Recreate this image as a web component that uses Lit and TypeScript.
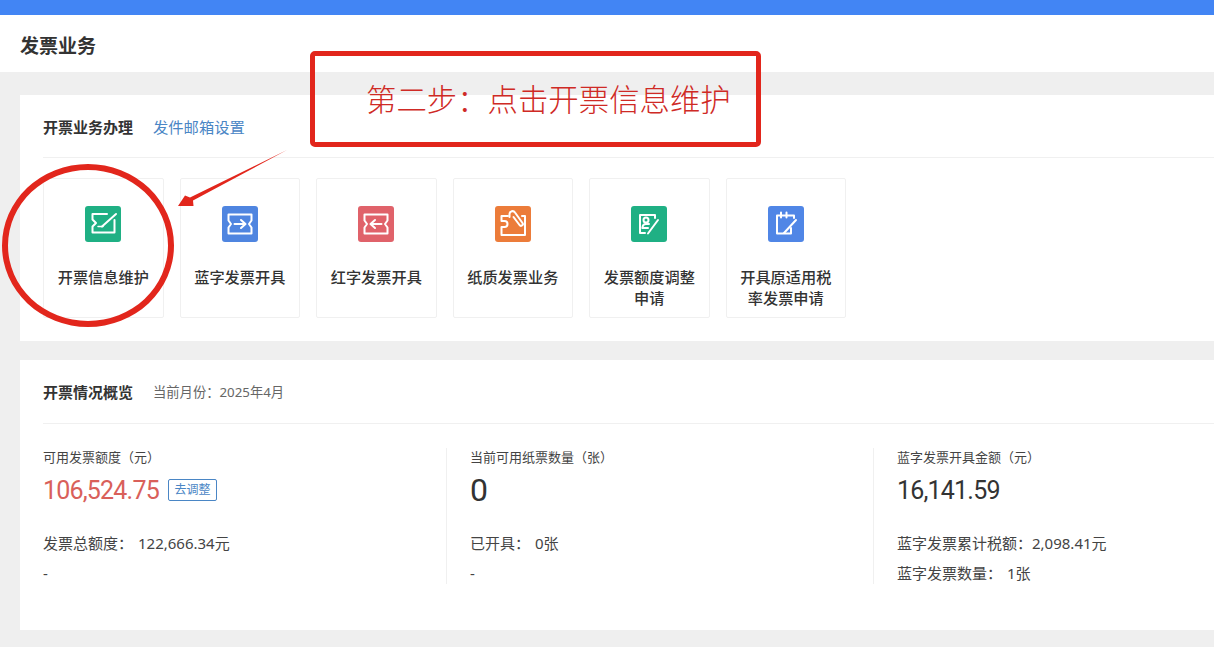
import { LitElement, html, css, svg } from 'lit';
import { customElement } from 'lit/decorators.js';

const tiles = [
  {
    label: '开票信息维护',
    color: '#1fb084',
    icon: svg`<path d="M22 8H7.500V13.500L11 17L7.500 20.500V26.500H29.500V14"/><path d="M17 20.500L31 8"/><path d="M13 20.500H18" stroke-width="1.500"/>`,
  },
  {
    label: '蓝字发票开具',
    color: '#4f85e0',
    icon: svg`<path d="M6.500 8.500H29.500V14.500L27 18L29.500 21.500V27.500H6.500V21.500L9 18L6.500 14.500Z"/><path d="M12.500 18H23"/><path d="M19 14L23.500 18L19 22"/>`,
  },
  {
    label: '红字发票开具',
    color: '#e0626a',
    icon: svg`<path d="M6.500 8.500H29.500V14.500L27 18L29.500 21.500V27.500H6.500V21.500L9 18L6.500 14.500Z"/><path d="M13 18H23.500"/><path d="M17 14L12.500 18L17 22"/>`,
  },
  {
    label: '纸质发票业务',
    color: '#ec7c3a',
    icon: svg`<path d="M13 10H6.500V15H9.500A3 3 0 0 1 9.500 21H6.500V29H30V10H27"/><path d="M14.500 11V8A3 3 0 0 1 20 6.500L27.500 17A1.800 1.800 0 0 1 24.500 19L18.500 11"/>`,
  },
  {
    label: '发票额度调整申请',
    color: '#1fb084',
    icon: svg`<path d="M24 12V9H9V27H14"/><circle cx="15" cy="14" r="2.500"/><path d="M11.500 22C11.500 19 13 18 15 18H18"/><path d="M11.500 22H17"/><path d="M17 27.500L27 14"/>`,
  },
  {
    label: '开具原适用税率发票申请',
    color: '#5086e6',
    icon: svg`<path d="M26 12V9.500H9V27.500H23V22"/><path d="M13 6.500V11.500M18.500 6.500V11.500"/><path d="M16 27L28 14"/>`,
  },
];

const stats = [
  {
    title: '可用发票额度（元）',
    value: '106,524.75',
    red: true,
    action: '去调整',
    lines: [{ label: '发票总额度：', value: '122,666.34元', gap: true }, { label: '-' }],
  },
  {
    title: '当前可用纸票数量（张）',
    value: '0',
    big: true,
    lines: [{ label: '已开具：', value: '0张', gap: true }, { label: '-' }],
  },
  {
    title: '蓝字发票开具金额（元）',
    value: '16,141.59',
    lines: [
      { label: '蓝字发票累计税额：', value: '2,098.41元' },
      { label: '蓝字发票数量：', value: '1张', gap: true },
    ],
  },
];

@customElement('app-root')
export class AppRoot extends LitElement {
  static styles = css`
    :host {
      display: block;
      position: relative;
      height: 647px;
      overflow: hidden;
      background: #efefef;
      color: #333;
      font-family: 'Noto Sans', 'Noto Sans CJK SC', sans-serif;
      font-size: 14px;
    }
    .topbar {
      height: 15px;
      background: #4285f4;
    }
    .page-head {
      box-sizing: border-box;
      height: 57px;
      padding: 2px 0 0 20px;
      display: flex;
      align-items: center;
      background: #fff;
      font-size: 19px;
      font-weight: 700;
      color: #333;
    }
    .content {
      padding: 23px 0 0 20px;
      display: flex;
      flex-direction: column;
      gap: 19px;
    }
    .card {
      background: #fff;
      padding-left: 23px;
    }
    .card-head {
      display: flex;
      align-items: center;
      gap: 20px;
      border-bottom: 1px solid #f0f0f0;
    }
    .biz {
      height: 246px;
    }
    .biz .card-head {
      height: 62px;
    }
    .card-title {
      font-size: 15px;
      font-weight: 700;
      color: #333;
      white-space: nowrap;
    }
    .link {
      color: #4a86c5;
      font-size: 15.3px;
    }
    .tiles {
      display: flex;
      gap: 16px;
      padding-top: 20px;
    }
    .tile {
      box-sizing: border-box;
      width: 120.5px;
      height: 140px;
      border: 1px solid #f0f0f0;
      border-radius: 2px;
      padding-top: 27px;
      display: flex;
      flex-direction: column;
      align-items: center;
    }
    .tile-icon {
      width: 36px;
      height: 36px;
      display: block;
    }
    .tile-icon g {
      fill: none;
      stroke: #fff;
      stroke-width: 2;
      stroke-linejoin: round;
      stroke-linecap: round;
    }
    .tile-label {
      margin-top: 25px;
      width: 94px;
      text-align: center;
      font-size: 15.2px;
      font-weight: 500;
      line-height: 21px;
      color: #333;
    }
    .overview {
      height: 270px;
    }
    .overview .card-head {
      height: 63px;
    }
    .month {
      font-size: 13.3px;
      color: #666;
    }
    .stats {
      display: grid;
      grid-template-columns: 403px 427px 341px;
      padding-top: 24px;
    }
    .stat {
      height: 136px;
      box-sizing: border-box;
    }
    .stat + .stat {
      border-left: 1px solid #f0f0f0;
      padding-left: 23px;
    }
    .stat-title {
      font-size: 13px;
      line-height: 19px;
      color: #444;
    }
    .stat-value {
      display: flex;
      align-items: center;
      gap: 9px;
      height: 30px;
      margin-top: 8px;
      font-family: Roboto, 'Noto Sans', sans-serif;
      font-size: 25px;
      letter-spacing: -0.8px;
      color: #333;
    }
    .stat-value.red {
      color: #d9605a;
    }
    .stat-value.big {
      font-size: 32px;
    }
    .adjust {
      box-sizing: border-box;
      width: 49px;
      height: 22px;
      border: 1px solid #4a86c5;
      border-radius: 2px;
      font-family: 'Noto Sans', 'Noto Sans CJK SC', sans-serif;
      font-size: 12px;
      letter-spacing: 0;
      line-height: 20px;
      text-align: center;
      color: #4a86c5;
    }
    .stat-lines {
      margin-top: 28px;
      display: flex;
      flex-direction: column;
      gap: 10px;
    }
    .stat-line {
      font-size: 15px;
      line-height: 20px;
      color: #444;
    }
    .gap {
      margin-left: 5px;
    }
    .callout {
      position: absolute;
      left: 310px;
      top: 51px;
      box-sizing: border-box;
      width: 451px;
      height: 96px;
      border: 5px solid #e2261c;
      border-radius: 5px;
      padding: 22px 0 0 51px;
      font-size: 30.4px;
      font-weight: 300;
      line-height: 44px;
      color: #cf2a25;
      white-space: nowrap;
    }
    .ring {
      position: absolute;
      left: 2px;
      top: 164px;
      box-sizing: border-box;
      width: 172px;
      height: 163px;
      border: 6px solid #e2261c;
      border-radius: 50%;
    }
    .arrow {
      position: absolute;
      left: 170px;
      top: 140px;
      width: 125px;
      height: 75px;
    }
  `;

  render() {
    return html`
      <div class="topbar"></div>
      <div class="page-head">发票业务</div>
      <div class="content">
        <section class="card biz">
          <div class="card-head">
            <span class="card-title">开票业务办理</span>
            <span class="link">发件邮箱设置</span>
          </div>
          <div class="tiles">
            ${tiles.map(
              (t) => html`
                <div class="tile">
                  <svg class="tile-icon" viewBox="0 0 36 36">
                    <rect width="36" height="36" rx="3" fill=${t.color}></rect>
                    <g>${t.icon}</g>
                  </svg>
                  <div class="tile-label">${t.label}</div>
                </div>
              `,
            )}
          </div>
        </section>
        <section class="card overview">
          <div class="card-head">
            <span class="card-title">开票情况概览</span>
            <span class="month">当前月份：2025年4月</span>
          </div>
          <div class="stats">
            ${stats.map(
              (s) => html`
                <div class="stat">
                  <div class="stat-title">${s.title}</div>
                  <div class="stat-value ${s.red ? 'red' : ''} ${s.big ? 'big' : ''}">
                    <span>${s.value}</span>
                    ${s.action ? html`<span class="adjust">${s.action}</span>` : ''}
                  </div>
                  <div class="stat-lines">
                    ${s.lines.map(
                      (l) => html`
                        <div class="stat-line">
                          <span>${l.label}</span><span class=${l.gap ? 'gap' : ''}>${l.value}</span>
                        </div>
                      `,
                    )}
                  </div>
                </div>
              `,
            )}
          </div>
        </section>
      </div>
      <div class="callout">第二步：点击开票信息维护</div>
      <div class="ring"></div>
      <svg class="arrow" viewBox="0 0 125 75">
        <path d="M117 10L23 60.500L23.500 66L8 66L15 55.500L20 57.500Z" fill="#e2261c"></path>
      </svg>
    `;
  }
}
